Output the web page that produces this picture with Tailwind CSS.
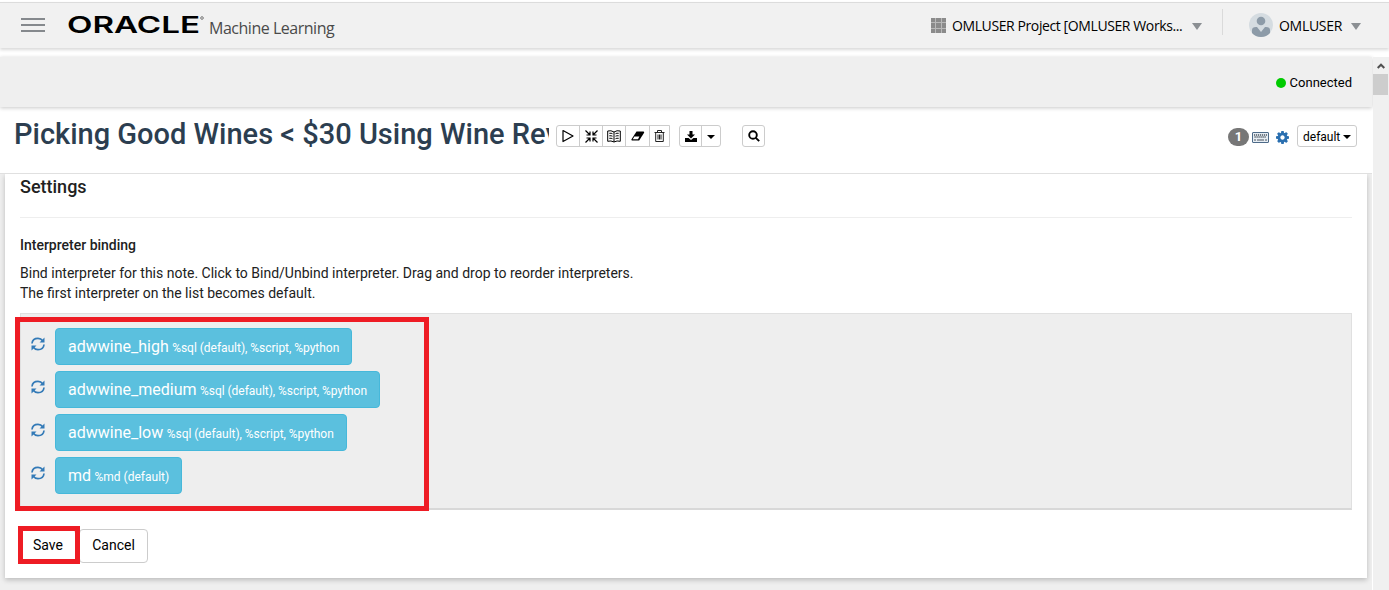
<!DOCTYPE html>
<html lang="en">
<head>
<meta charset="utf-8">
<title>Oracle Machine Learning</title>
<script src="https://cdn.jsdelivr.net/npm/@tailwindcss/browser@4"></script>
</head>
<body class="w-[1389px] h-[590px] overflow-hidden bg-white font-['Roboto',sans-serif] text-[14px] text-[#212121] flex flex-col">
<header class="relative z-10 mt-[2px] h-[46px] shrink-0 border-t border-[#dcdcdc] bg-[#f1f1f1] shadow-[0_2px_3px_rgba(0,0,0,0.15)] flex items-start font-['Open_Sans',sans-serif]">
  <svg class="ml-[21px] mt-[15px] shrink-0" width="24" height="14" viewBox="0 0 24 14" fill="#85898d"><path d="M0 0h24v2H0zM0 6h24v2H0zM0 12h24v2H0z"/></svg>
  <svg class="ml-[23px] mt-[8px] shrink-0" width="137" height="28" viewBox="0 0 137 28"><text x="-1" y="22" font-family="Inter" font-weight="600" font-size="23.5" textLength="133" lengthAdjust="spacingAndGlyphs" fill="#000">ORACLE</text><circle cx="134" cy="7" r="1.300" fill="none" stroke="#777"/></svg>
  <div class="ml-[4px] mt-[13px] w-[128px] shrink-0 whitespace-nowrap text-[16px] leading-6 tracking-[-0.48px] text-[#4a4a4a]">Machine Learning</div>
  <svg class="ml-[594px] mt-[15px] shrink-0" width="15" height="15" viewBox="0 0 15 15" fill="#8b8b8b"><path fill="#b9b9b9" d="M0 0h15v15H0z"/><path d="M0 0h4v4H0zM5 0h5v4H5zM11 0h4v4h-4zM0 5h4v5H0zM5 5h5v5H5zM11 5h4v5h-4zM0 11h4v4H0zM5 11h5v4H5zM11 11h4v4h-4z"/></svg>
  <div class="ml-[6px] mt-[12px] w-[234px] shrink-0 whitespace-nowrap text-[14px] leading-[22px] tracking-[-0.4px] text-black">OMLUSER Project [OMLUSER Works...</div>
  <svg class="ml-[6px] mt-[20px] shrink-0" width="10" height="7" viewBox="0 0 10 7" fill="#8b8f93"><path d="M0 0h10L5 7z"/></svg>
  <div class="ml-[20px] mt-[6px] h-[26px] w-px shrink-0 bg-[#dadada]"></div>
  <svg class="ml-[26px] mt-[10px] shrink-0" width="24" height="24" viewBox="0 0 24 24"><circle cx="12" cy="12" r="12" fill="#d5dce1"/><circle cx="12" cy="8" r="4.300" fill="#8d9ba8"/><path d="M3 20v-3q0-3 4-3h1l4 5 4-5h1q4 0 4 3v3q-3.500 4-9 4t-9-4z" fill="#8d9ba8"/></svg>
  <div class="ml-[6px] mt-[12px] w-[66px] shrink-0 whitespace-nowrap text-[14px] leading-[22px] tracking-[-0.3px] text-black">OMLUSER</div>
  <svg class="ml-[6px] mt-[20px] shrink-0" width="10" height="7" viewBox="0 0 10 7" fill="#8b8f93"><path d="M0 0h10L5 7z"/></svg>
</header>
<div class="mt-[9px] flex min-h-0 flex-1">
  <main class="flex w-[1372px] shrink-0 flex-col">
    <div class="flex h-[50px] shrink-0 items-center justify-end bg-[#efefef] pr-[20px] shadow-[0_1px_4px_rgba(0,0,0,0.22)]">
      <span class="mr-[4px] mt-px size-[10px] rounded-full bg-[#00cb00]"></span>
      <span class="mt-px text-[13px] text-black">Connected</span>
    </div>
    <div class="flex h-[67px] shrink-0 items-start border-b border-[#e0e0e0] text-black">
      <h1 class="ml-[14px] mt-[8px] w-[535px] overflow-hidden whitespace-nowrap text-[29px] font-medium leading-[38px] text-[#2c3e50]">Picking Good Wines &lt; $30 Using Wine Rev</h1>
      <div class="ml-[7px] mt-[18px] flex h-[22px] w-[114px] divide-x divide-[#ccc] rounded-l-[3px] border border-[#ccc] *:flex *:shrink-0 *:items-center *:justify-center">
        <span class="w-[23px]"><svg width="12" height="14" viewBox="0 0 12 14" fill="none" stroke="#000" stroke-width="1.200" stroke-linejoin="round"><path d="M1 1.500L11 7 1 12.500z"/></svg></span>
        <span class="w-[23px]"><svg width="13" height="13" viewBox="0 0 13 13" fill="none" stroke="#000" stroke-width="1.200"><path d="M.5.5L5 5M5 1.500V5H1.500M12.500.5L8 5M8 1.500V5h3.500M.5 12.500L5 8M5 11.500V8H1.500M12.500 12.500L8 8M8 11.500V8h3.500"/></svg></span>
        <span class="w-[23px]"><svg width="14" height="13" viewBox="0 0 14 13" fill="none" stroke="#000"><path d="M7 2Q4 0 .7 1v10.300Q4 10.300 7 12q3-1.700 6.300-.7V1Q10 0 7 2zv10M2.300 3.300q2-.3 3.200.4M2.300 5.800q2-.3 3.200.4M2.300 8.300q2-.3 3.200.4M11.700 3.300q-2-.3-3.200.4M11.700 5.800q-2-.3-3.200.4M11.700 8.300q-2-.3-3.200.4"/></svg></span>
        <span class="w-[24px]"><svg width="14" height="10" viewBox="0 0 14 10"><path d="M5.500.5h7q1 .3.600 1.200L8.500 9q-.4.500-1 .5h-6.500q-1-.3-.5-1.200z"/><path d="M3.400 5.500h5L7 8.300H1.700z" fill="#fff"/></svg></span>
        <span class="w-[19px]"><svg width="11" height="12" viewBox="0 0 11 12" fill="none" stroke="#222"><path d="M.5 2.500h10M3.500 2.500v-2h4v2M1.700 3v8.500h7.600V3M4 4.500v5M5.500 4.500v5M7 4.500v5"/></svg></span>
      </div>
      <div class="ml-[9px] mt-[18px] flex h-[22px] w-[42px] divide-x divide-[#ccc] rounded-[3px] border border-[#ccc] *:flex *:items-center *:justify-center">
        <span class="w-[22px]"><svg width="12" height="11" viewBox="0 0 12 11"><path d="M4.500 0h3v3.500H10L6 7.500 2 3.500h2.500zM0 7h3.500L6 9l2.500-2H12v4H0z"/></svg></span>
        <span class="w-[18px] pt-[2px]"><svg width="8" height="4" viewBox="0 0 8 4"><path d="M0 0h8L4 4z"/></svg></span>
      </div>
      <div class="ml-[21px] mt-[18px] flex h-[22px] w-[23px] items-center justify-center rounded-[3px] border border-[#ccc]">
        <svg width="12" height="12" viewBox="0 0 12 12" fill="none" stroke="#000" stroke-width="1.900"><circle cx="5" cy="5" r="3.800"/><path d="M7.800 7.800l3.400 3.400"/></svg>
      </div>
      <div class="ml-[463px] mt-[21px] flex h-[18px] w-[21px] items-center justify-center rounded-full bg-[#777] text-[13px] font-bold text-white">1</div>
      <svg class="ml-[3px] mt-[25px] shrink-0" width="17" height="11" viewBox="0 0 17 11"><rect x=".5" y=".5" width="16" height="10" rx=".5" fill="#e6edf3" stroke="#4d6a88"/><path d="M2 3h13M2.500 5h12" stroke="#4b5561" stroke-width="1.300" stroke-dasharray="1.200 .8"/><path d="M2 8h2M5 8h7M13 8h2" stroke="#4b5561" stroke-width="1.200"/></svg>
      <svg class="ml-[7px] mt-[24px] shrink-0" width="13" height="13" viewBox="0 0 1536 1536" fill="#2a6fb0"><path d="M1024 768q0-106-75-181t-181-75-181 75-75 181 75 181 181 75 181-75 75-181zm512-109v222q0 12-8 23t-20 13l-185 28q-19 54-39 91 35 50 107 138 10 12 10 25t-9 23q-27 37-99 108t-94 71q-12 0-26-9l-138-108q-44 23-91 38-16 136-29 186-7 28-36 28h-222q-14 0-24.500-8.500t-11.500-21.500l-28-184q-49-16-90-37l-141 107q-10 9-25 9-14 0-25-11-126-114-165-168-7-10-7-23 0-12 8-23 15-21 51-66.500t54-70.500q-27-50-41-99l-183-27q-13-2-21-12.500t-8-23.500v-222q0-12 8-23t19-13l186-28q14-46 39-92-40-57-107-138-10-12-10-24 0-10 9-23 26-36 98.500-107.500t94.500-71.500q13 0 26 10l138 107q44-23 91-38 16-136 29-186 7-28 36-28h222q14 0 24.500 8.500t11.500 21.500l28 184q49 16 90 37l142-107q9-9 24-9 13 0 25 10 129 119 165 170 7 8 7 22 0 12-8 23-15 21-51 66.500t-54 70.500q26 50 41 98l183 28q13 2 21 12.500t8 23.500z"/></svg>
      <div class="ml-[8px] mt-[18px] flex h-[22px] w-[60px] items-center rounded-[3px] border border-[#ccc] pl-[5px] text-[12px]"><span class="pt-px">default</span><svg class="ml-[3px] mt-[2px]" width="8" height="4" viewBox="0 0 8 4"><path d="M0 0h8L4 4z"/></svg></div>
    </div>
    <div class="flex flex-1 items-start bg-[#efefef] px-[5px]">
      <section class="relative h-[404px] w-[1362px] bg-white px-[15px] shadow-[0_2px_5px_rgba(0,0,0,0.22)] [clip-path:inset(0_-5px_-10px_-5px)]">
        <h2 class="h-[44px] border-b border-[#eee] pt-[3px] text-[18px] font-medium leading-5">Settings</h2>
        <h3 class="pt-[17px] font-medium leading-5">Interpreter binding</h3>
        <p class="mt-[8px] leading-5">Bind interpreter for this note. Click to Bind/Unbind interpreter. Drag and drop to reorder interpreters.<br>The first interpreter on the list becomes default.</p>
        <div class="mt-[10px] flex h-[197px] flex-col gap-[6px] border border-b-2 border-[#e0e0e0] border-b-[#d8d8d8] bg-[#eee] pl-[10px] pt-[14px] text-white">
          <div class="flex">
            <svg class="mt-[9px] mr-[10px]" width="14" height="14" viewBox="0 0 14 14" fill="none" stroke="#337ab7" stroke-width="1.700"><path d="M1 6.500Q1.500 1.300 7 1.300q3 0 4.700 2.400M13 7.500Q12.500 12.700 7 12.700q-3 0-4.700-2.400"/><path d="M13.500.5v5h-5zM.5 13.500v-5h5z" fill="#337ab7" stroke="none"/></svg>
            <div class="flex h-[37px] w-[297px] items-center whitespace-nowrap rounded-[4px] border border-[#46b8da] bg-[#5bc0de] pl-[12px]"><div><span class="text-[16px]">adwwine_high</span> <span class="text-[12px] tracking-[-0.03px]">%sql (default), %script, %python</span></div></div>
          </div>
          <div class="flex">
            <svg class="mt-[9px] mr-[10px]" width="14" height="14" viewBox="0 0 14 14" fill="none" stroke="#337ab7" stroke-width="1.700"><path d="M1 6.500Q1.500 1.300 7 1.300q3 0 4.700 2.400M13 7.500Q12.500 12.700 7 12.700q-3 0-4.700-2.400"/><path d="M13.500.5v5h-5zM.5 13.500v-5h5z" fill="#337ab7" stroke="none"/></svg>
            <div class="flex h-[37px] w-[325px] items-center whitespace-nowrap rounded-[4px] border border-[#46b8da] bg-[#5bc0de] pl-[12px]"><div><span class="text-[16px]">adwwine_medium</span> <span class="text-[12px] tracking-[-0.03px]">%sql (default), %script, %python</span></div></div>
          </div>
          <div class="flex">
            <svg class="mt-[9px] mr-[10px]" width="14" height="14" viewBox="0 0 14 14" fill="none" stroke="#337ab7" stroke-width="1.700"><path d="M1 6.500Q1.500 1.300 7 1.300q3 0 4.700 2.400M13 7.500Q12.500 12.700 7 12.700q-3 0-4.700-2.400"/><path d="M13.500.5v5h-5zM.5 13.500v-5h5z" fill="#337ab7" stroke="none"/></svg>
            <div class="flex h-[37px] w-[292px] items-center whitespace-nowrap rounded-[4px] border border-[#46b8da] bg-[#5bc0de] pl-[12px]"><div><span class="text-[16px]">adwwine_low</span> <span class="text-[12px] tracking-[-0.03px]">%sql (default), %script, %python</span></div></div>
          </div>
          <div class="flex">
            <svg class="mt-[9px] mr-[10px]" width="14" height="14" viewBox="0 0 14 14" fill="none" stroke="#337ab7" stroke-width="1.700"><path d="M1 6.500Q1.500 1.300 7 1.300q3 0 4.700 2.400M13 7.500Q12.500 12.700 7 12.700q-3 0-4.700-2.400"/><path d="M13.500.5v5h-5zM.5 13.500v-5h5z" fill="#337ab7" stroke="none"/></svg>
            <div class="flex h-[37px] w-[127px] items-center whitespace-nowrap rounded-[4px] border border-[#46b8da] bg-[#5bc0de] pl-[12px]"><div><span class="text-[16px]">md</span> <span class="text-[12px]">%md (default)</span></div></div>
          </div>
        </div>
        <div class="mt-[19px] flex text-black">
          <button class="h-[34px] w-[56px] rounded-[4px] border border-[#ccc] pb-[2px]">Save</button>
          <button class="ml-[3px] h-[34px] w-[69px] rounded-[4px] border border-[#ccc] pb-[2px]">Cancel</button>
        </div>
        <div class="absolute left-[10px] top-[143px] h-[194px] w-[414px] border-[5px] border-[#ee1c24]"></div>
        <div class="absolute left-[13px] top-[352px] h-[38px] w-[62px] border-[5px] border-[#ee1c24]"></div>
      </section>
    </div>
  </main>
  <aside class="ml-px flex w-[16px] flex-col items-start bg-[#f0f0f0]">
    <svg class="mt-[6px] ml-[4px]" width="8" height="6" viewBox="0 0 8 6" fill="none" stroke="#505050" stroke-width="2"><path d="M.7 5L4 1.700 7.300 5"/></svg>
    <div class="mt-[5px] h-[21px] w-[15px] bg-[#cdcdcd]"></div>
  </aside>
</div>
</body>
</html>
